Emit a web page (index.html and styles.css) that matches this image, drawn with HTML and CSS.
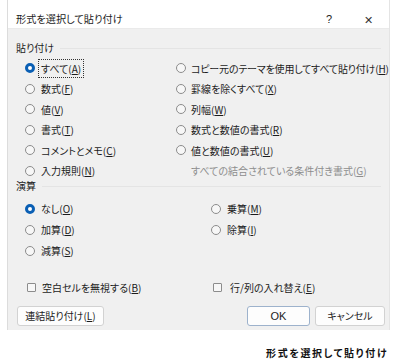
FILE: index.html
```html
<!DOCTYPE html>
<html lang="ja">
<head>
    <meta charset="UTF-8">
    <meta name="viewport" content="width=device-width, initial-scale=1.0">
    <title>形式を選択して貼り付け</title>
    <link rel="stylesheet" href="styles.css">
</head>
<body>
    <div class="dialog">
        <div class="titlebar">
            <span class="title">形式を選択して貼り付け</span>
            <span class="help">?</span>
            <span class="close">&#x2715;</span>
        </div>

        <div class="dialog-body">
            <div class="group-label">貼り付け</div>
            <div class="paste-grid">
                <label class="option"><span class="radio checked"></span><span class="focus">すべて(<u>A</u>)</span></label>
                <label class="option tight"><span class="radio"></span>コピー元のテーマを使用してすべて貼り付け(<u>H</u>)</label>

                <label class="option"><span class="radio"></span>数式(<u>F</u>)</label>
                <label class="option"><span class="radio"></span>罫線を除くすべて(<u>X</u>)</label>

                <label class="option"><span class="radio"></span>値(<u>V</u>)</label>
                <label class="option"><span class="radio"></span>列幅(<u>W</u>)</label>

                <label class="option"><span class="radio"></span>書式(<u>T</u>)</label>
                <label class="option"><span class="radio"></span>数式と数値の書式(<u>R</u>)</label>

                <label class="option"><span class="radio"></span>コメントとメモ(<u>C</u>)</label>
                <label class="option"><span class="radio"></span>値と数値の書式(<u>U</u>)</label>

                <label class="option"><span class="radio"></span>入力規則(<u>N</u>)</label>
                <label class="option disabled">すべての結合されている条件付き書式(<u>G</u>)</label>
            </div>

            <div class="group-label op-label">演算</div>
            <div class="op-grid">
                <label class="option"><span class="radio checked"></span>なし(<u>O</u>)</label>
                <label class="option"><span class="radio"></span>乗算(<u>M</u>)</label>

                <label class="option"><span class="radio"></span>加算(<u>D</u>)</label>
                <label class="option"><span class="radio"></span>除算(<u>I</u>)</label>

                <label class="option"><span class="radio"></span>減算(<u>S</u>)</label>
            </div>

            <div class="check-row">
                <label class="option"><span class="checkbox"></span>空白セルを無視する(<u>B</u>)</label>
                <label class="option"><span class="checkbox"></span>行/列の入れ替え(<u>E</u>)</label>
            </div>

            <div class="button-row">
                <button type="button" class="link-paste">連結貼り付け(<u>L</u>)</button>
                <div class="spacer"></div>
                <button type="button" class="ok">OK</button>
                <button type="button" class="cancel">キャンセル</button>
            </div>
        </div>
    </div>

    <p class="caption">形式を選択して貼り付け</p>
</body>
</html>
```

FILE: styles.css
```css
* {
    box-sizing: border-box;
}
body {
    margin: 0;
    background-color: #ffffff;
    color: #1c1c1c;
    font-family: "Noto Sans CJK JP", "Noto Sans", sans-serif;
    font-size: 10px;
    font-feature-settings: "palt";
}
.dialog {
    margin-left: 7px;
    width: 383px;
    height: 330px;
    border-left: 1px solid #dcdcdc;
    border-right: 1px solid #e4e4e4;
    background-color: #f0f0f0;
}
.titlebar {
    display: flex;
    align-items: center;
    height: 28px;
    padding: 10px 0 0 8px;
    background-color: #ffffff;
    line-height: 18px;
    font-size: 10.2px;
}
.title {
    flex: 1;
}
.help {
    width: 12px;
    font-family: "Liberation Sans", sans-serif;
    font-size: 11px;
}
.close {
    width: 12px;
    margin: 0 13px 0 26px;
    font-size: 11px;
    color: #333;
}
.dialog-body {
    padding: 10px 0 0 8px;
    border-top: 1px solid #eaeaea;
}
.group-label {
    display: flex;
    align-items: center;
    gap: 6px;
    height: 18px;
    line-height: 18px;
}
.group-label::after {
    content: "";
    flex: 1;
    height: 1px;
    margin-right: 8px;
    background-color: #e4e4e4;
}
.paste-grid {
    display: grid;
    grid-template-columns: 151px 1fr;
    grid-auto-rows: 20.5px;
    margin-top: 1px;
    padding-left: 9px;
}
.op-label {
    margin-top: -4px;
}
.op-grid {
    display: grid;
    grid-template-columns: 186px 1fr;
    grid-auto-rows: 21px;
    margin-top: 3px;
    padding-left: 9px;
}
.option {
    display: flex;
    align-items: center;
    white-space: nowrap;
}
.option.tight {
    letter-spacing: -0.2px;
}
.option u {
    text-decoration-thickness: 1px;
    text-underline-offset: 1px;
}
.radio {
    width: 10px;
    height: 10px;
    margin-right: 6px;
    border: 1px solid #8c8c8c;
    border-radius: 50%;
    background-color: #f7f7f7;
}
.paste-grid .option:nth-child(even) .radio {
    margin-right: 5px;
}
.radio.checked {
    border: 3px solid #0a5fb4;
    background-color: #ffffff;
}
.focus {
    padding: 0 1px;
    margin-left: -1px;
    outline: 1px dotted #333;
    outline-offset: 1px;
}
.disabled {
    padding-left: 15px;
    color: #8d8d8d;
}
.check-row {
    display: grid;
    grid-template-columns: 186px 1fr;
    height: 20px;
    margin-top: 16px;
    padding-left: 11px;
}
.checkbox {
    width: 9px;
    height: 9px;
    margin-right: 6px;
    border: 1px solid #8c8c8c;
    border-radius: 1px;
    background-color: #f7f7f7;
}
.check-row .option:last-child .checkbox {
    margin-right: 8px;
}
.button-row {
    display: flex;
    align-items: center;
    margin-top: 9px;
    padding-right: 4px;
}
.spacer {
    flex: 1;
}
button {
    height: 20px;
    padding: 0;
    border: 1px solid #d2d2d2;
    border-radius: 3px;
    background-color: #fdfdfd;
    color: #1c1c1c;
    font-family: inherit;
    font-size: 10px;
    font-feature-settings: "palt";
    line-height: 18px;
}
button.link-paste {
    width: 87px;
    margin-left: 1px;
}
button.ok {
    width: 63px;
    border-color: #9db2cc;
    font-family: "Liberation Sans", sans-serif;
    font-size: 11px;
}
button.cancel {
    width: 70px;
    margin-left: 5px;
}
.caption {
    margin: 15px 12px 0 0;
    text-align: right;
    font-size: 10px;
    font-weight: bold;
    letter-spacing: 1.6px;
    color: #111;
}
```
